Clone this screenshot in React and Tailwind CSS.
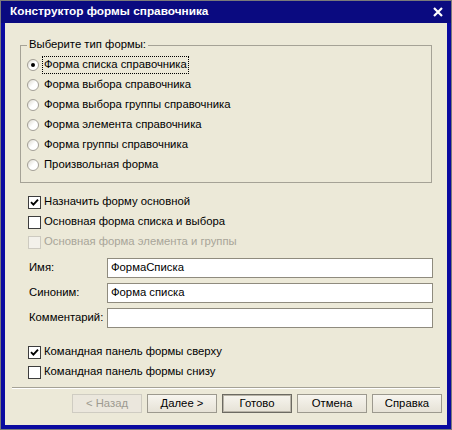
import React from "react";

function Radio({ checked }) {
  return (
    <span className="relative w-[12px] h-[12px] rounded-full border border-[#a4a097] bg-gradient-to-br from-[#dcd9cf] via-white to-white flex items-center justify-center shrink-0">
      {checked && <span className="w-[4px] h-[4px] rounded-full bg-black" />}
    </span>
  );
}

function Check({ checked, disabled }) {
  return (
    <span
      className={
        "w-[13px] h-[13px] border shrink-0 flex items-center justify-center " +
        (disabled ? "border-[#cdcac0] bg-[#f3f1ea]" : "border-[#3d3d3d] bg-white")
      }
    >
      {checked && (
        <svg width="9" height="9" viewBox="0 0 9 9">
          <path d="M1 4.2 L3.4 6.6 L8 1.6" fill="none" stroke="black" strokeWidth="1.9" />
        </svg>
      )}
    </span>
  );
}

function Btn({ children, disabled, def }) {
  return (
    <div
      className={
        "w-[70px] h-[19px] flex items-center justify-center " +
        (disabled
          ? "border border-[#cfccc2] bg-[#ebe7dd] text-[#9d9a90]"
          : def
          ? "border border-[#6c6a62] bg-gradient-to-b from-[#f7f5ef] to-[#e6e2d6] text-black shadow-[inset_0_0_0_1px_#b8b4a8]"
          : "border border-[#9c998e] bg-gradient-to-b from-[#f7f5ef] to-[#e6e2d6] text-black")
      }
    >
      {children}
    </div>
  );
}

export default function App() {
  const radios = [
    "Форма списка справочника",
    "Форма выбора справочника",
    "Форма выбора группы справочника",
    "Форма элемента справочника",
    "Форма группы справочника",
    "Произвольная форма",
  ];
  return (
    <div className="w-[452px] h-[430px] border border-[#7a7a7a] bg-[#0a0aa0] flex flex-col font-['Liberation_Sans',Arial,sans-serif]">
      <div className="h-[22px] bg-[#0a0a80] flex items-center justify-between pl-[9px] pr-[8px] shrink-0">
        <span className="text-white font-bold text-[11.8px] leading-none">Конструктор формы справочника</span>
        <svg width="10" height="10" viewBox="0 0 10 10">
          <path d="M1 1 L9 9 M9 1 L1 9" stroke="white" strokeWidth="2.2" />
        </svg>
      </div>
      <div className="flex-1 px-[4px] pb-[4px] flex flex-col">
        <div className="flex-1 bg-[#ece9d8] flex flex-col text-[11.3px] text-black leading-none">
          <div className="relative mt-[22px] mx-[15px] border border-[#a5a296] pt-[9px] pl-[6px] pb-[7px] flex flex-col">
            <span className="absolute -top-[7px] left-[6px] px-[2px] bg-[#ece9d8]">Выберите тип формы:</span>
            {radios.map((r, i) => (
              <div key={r} className="h-[20px] flex items-center gap-[4px]">
                <Radio checked={i === 0} />
                <span className={"px-[1px] py-[2px] " + (i === 0 ? "outline outline-1 outline-dotted outline-black" : "")}>{r}</span>
              </div>
            ))}
          </div>

          <div className="mt-[9px] pl-[23px] flex flex-col">
            <div className="h-[20px] flex items-center gap-[3px]">
              <Check checked />
              <span>Назначить форму основной</span>
            </div>
            <div className="h-[20px] flex items-center gap-[3px]">
              <Check />
              <span>Основная форма списка и выбора</span>
            </div>
            <div className="h-[20px] flex items-center gap-[3px]">
              <Check disabled />
              <span className="text-[#a8a598]">Основная форма элемента и группы</span>
            </div>
          </div>

          <div className="mt-[6px] pl-[24px] pr-[14px] flex flex-col gap-[5px]">
            {[
              ["Имя:", "ФормаСписка"],
              ["Синоним:", "Форма списка"],
              ["Комментарий:", ""],
            ].map(([l, v]) => (
              <div key={l} className="flex items-center">
                <span className="w-[78px] shrink-0">{l}</span>
                <div className="flex-1 h-[20px] border border-[#8f8b7e] bg-white flex items-center px-[3px]">{v}</div>
              </div>
            ))}
          </div>

          <div className="mt-[14px] pl-[23px] flex flex-col">
            <div className="h-[20px] flex items-center gap-[3px]">
              <Check checked />
              <span>Командная панель формы сверху</span>
            </div>
            <div className="h-[20px] flex items-center gap-[3px]">
              <Check />
              <span>Командная панель формы снизу</span>
            </div>
          </div>

          <div className="mt-[5px] mx-[7px] h-[2px] border-t border-[#a5a296] border-b border-b-white" />

          <div className="mt-[5px] pr-[5px] flex justify-end gap-[5px]">
            <Btn disabled>&lt; Назад</Btn>
            <Btn>Далее &gt;</Btn>
            <Btn def>Готово</Btn>
            <Btn>Отмена</Btn>
            <Btn>Справка</Btn>
          </div>
        </div>
      </div>
    </div>
  );
}
